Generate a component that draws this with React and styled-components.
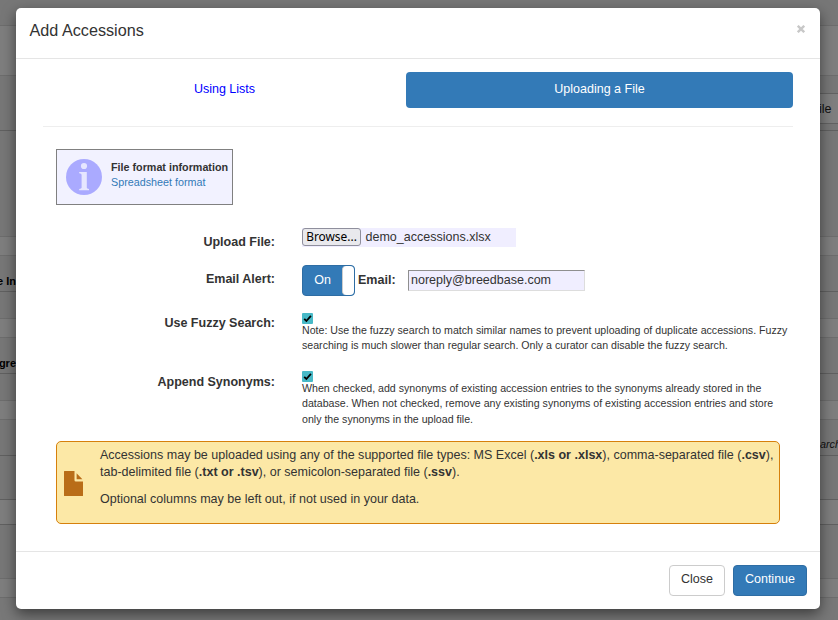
import React from "react";
import styled, { createGlobalStyle } from "styled-components";

const Global = createGlobalStyle`
  *, *::before, *::after { box-sizing: border-box; }
  body { margin: 0; font-family: "Liberation Sans", Arial, sans-serif; font-size: 12.52px; line-height: 17px; color: #333; }
  p { margin: 0; }
`;

const Screen = styled.div`
  position: relative;
  height: 620px;
  overflow: hidden;
  background: #787878;
`;

const PageBand = styled.div`
  display: flex;
  justify-content: space-between;
  height: ${(p) => p.$h}px;
  background: ${(p) => (p.$light ? "#7e7e7e" : "#777")};
  border-bottom: 1px solid ${(p) => (p.$dark ? "#606060" : "#6d6d6d")};
  color: #111;
  overflow: hidden;
`;

const PageLabel = styled.span`
  flex: none;
  width: 16px;
  display: flex;
  justify-content: flex-end;
  align-self: flex-end;
  padding-bottom: 1px;
  font-size: 11px;
  font-weight: bold;
  white-space: nowrap;
  color: #000;
`;

const PageNote = styled.span`
  width: 18px;
  margin-left: auto;
  padding-top: 16px;
  font-size: 10.8px;
  font-style: italic;
  white-space: nowrap;
`;

const PageButton = styled.span`
  width: 19px;
  height: 31px;
  margin: 17px 0 0 auto;
  padding: 7px 0 0 0;
  border: solid #626262;
  border-width: 1px 0;
  background: #7f7f7f;
  white-space: nowrap;
`;

const Modal = styled.section`
  position: absolute;
  top: 8px;
  left: 16px;
  width: 804px;
  height: 601px;
  display: flex;
  flex-direction: column;
  background: #fff;
  background-clip: padding-box;
  border-radius: 5px;
  box-shadow: 0 5px 14px rgba(0, 0, 0, 0.5);
`;

const Header = styled.header`
  display: flex;
  justify-content: space-between;
  height: 51px;
  padding: 12px 15px 0 13.5px;
  border-bottom: 1px solid #e5e5e5;
`;

const Title = styled.h4`
  margin: 0;
  font-size: 16.2px;
  line-height: 20px;
  font-weight: normal;
`;

const CloseIcon = styled.svg`
  margin-top: 5px;
`;

const Body = styled.div`
  flex: 1;
  padding: 13px 27px 0;
`;

const Tabs = styled.nav`
  display: grid;
  grid-template-columns: 363px 387px;
  height: 55px;
  border-bottom: 1px solid #eee;
`;

const Tab = styled.a`
  height: 36px;
  border-radius: 4px;
  line-height: 34px;
  text-align: center;
  color: ${(p) => (p.$active ? "#fff" : "#00f")};
  background: ${(p) => (p.$active ? "#337ab7" : "none")};
`;

const Content = styled.div`
  padding: 22px 13px 0;
`;

const InfoBox = styled.div`
  display: flex;
  width: 177px;
  height: 56px;
  padding: 9px 0 0 9px;
  gap: 9px;
  border: 1px solid #808080;
  background: #f2f2ff;
  font-size: 10.76px;
  line-height: 15px;
  white-space: nowrap;
`;

const InfoText = styled.div`
  padding-top: 1px;
`;

const InfoLink = styled.div`
  color: #337ab7;
`;

const Form = styled.div`
  padding-top: 23px;
`;

const Row = styled.div`
  display: grid;
  grid-template-columns: 219px 500px;
  column-gap: 27px;
  height: ${(p) => p.$h}px;
`;

const Label = styled.label`
  text-align: right;
  font-weight: bold;
  padding-top: ${(p) => p.$top}px;
`;

const FileInput = styled.div`
  display: flex;
  width: 214px;
  height: 19px;
  gap: 4.5px;
  line-height: 18px;
  background: #f0eeff;
`;

const BrowseButton = styled.span`
  width: 59px;
  height: 18px;
  border: 1px solid #8f8f9d;
  border-radius: 3px;
  background: #e9e9ed;
  color: #000;
  font-family: "Noto Sans", sans-serif;
  font-size: 11.9px;
  line-height: 15px;
  text-align: center;
`;

const EmailLine = styled.div`
  display: flex;
  align-items: flex-start;
`;

const Toggle = styled.div`
  display: flex;
  width: 53px;
  height: 31px;
  border: 1px solid #2e6da4;
  border-radius: 4px;
  background: #337ab7;
  color: #fff;
  line-height: 29px;
`;

const ToggleText = styled.span`
  flex: 1;
  text-align: center;
`;

const ToggleHandle = styled.span`
  width: 12px;
  border: 1px solid #ccc;
  border-width: 0 0 0 1px;
  border-radius: 4px;
  background: #fff;
`;

const EmailLabel = styled.b`
  width: 50px;
  margin: 7px 0 0 3px;
`;

const EmailInput = styled.div`
  width: 177px;
  height: 21px;
  margin-top: 5px;
  padding-left: 2px;
  border: 1px solid #ddd;
  border-top-color: #8f8f8f;
  border-left-color: #8f8f8f;
  background: #f0eeff;
  line-height: 18px;
`;

const Help = styled.div`
  font-size: 10.61px;
  line-height: 15.5px;
  white-space: nowrap;
`;

const CheckSlot = styled.div`
  height: 9.8px;
  svg { display: block; }
`;

const Notice = styled.div`
  display: flex;
  width: 724px;
  height: 83px;
  padding: 5px 0 0 7px;
  border: 1px solid #d6800c;
  border-radius: 5px;
  background: #fce8a6;
  white-space: nowrap;
  svg { flex: none; margin: 24px 17px 0 0; }
`;

const NoticeText = styled.div`
  p + p { margin-top: 10px; }
`;

const Footer = styled.footer`
  display: flex;
  justify-content: flex-end;
  gap: 8px;
  height: 58px;
  padding: 13px 13px 0;
  border-top: 1px solid #e5e5e5;
`;

const Button = styled.button`
  width: ${(p) => (p.$primary ? 74 : 56)}px;
  height: 31px;
  padding: 0 0 2px;
  font: inherit;
  border: 1px solid ${(p) => (p.$primary ? "#2e6da4" : "#ccc")};
  border-radius: 4px;
  color: ${(p) => (p.$primary ? "#fff" : "#333")};
  background: ${(p) => (p.$primary ? "#337ab7" : "#fff")};
`;

const InfoIcon = () => (
  <svg width="36" height="36" viewBox="0 0 36 36">
    <circle cx="18" cy="18" r="18" fill="#aaaaff" />
    <circle cx="18" cy="7" r="3.1" fill="#e6e6ff" />
    <path d="M13.2 13H20.8V28.7Q20.8 29.8 23 30V31.2H13.2V30Q15.6 29.8 15.6 28.7V15.8Q15.6 14.4 13.2 14.2Z" fill="#e6e6ff" />
  </svg>
);

const CheckBox = () => (
  <CheckSlot>
    <svg width="11" height="11" viewBox="0 0 11 11">
      <rect width="11" height="11" rx="1" fill="#48b9c7" />
      <path d="M2.2 5.8 4.4 8 8.9 2.8" fill="none" stroke="#000" strokeWidth="1.8" />
    </svg>
  </CheckSlot>
);

const FileIcon = () => (
  <svg width="19" height="25" viewBox="0 0 19 25">
    <path d="M0 .5Q0 0 .5 0H10.5V9.2Q10.5 10.5 11.8 10.5H19V24.5Q19 25 18.5 25H.5Q0 25 0 24.5Z" fill="#b96d18" />
    <path d="M12.6 2.2 18.4 8.2H12.6Z" fill="#b96d18" />
  </svg>
);

const bands = [
  { h: 26 },
  { h: 50, light: true },
  { h: 55, dark: true, button: "ile" },
  { h: 106 },
  { h: 19, light: true },
  { h: 36, dark: true, label: "e In" },
  { h: 27 },
  { h: 19, light: true },
  { h: 36, dark: true, label: "gre" },
  { h: 27 },
  { h: 19, light: true },
  { h: 36, dark: true, note: "arch" },
  { h: 44, dark: true },
  { h: 25, light: true, dark: true },
  { h: 54 },
  { h: 19, light: true },
];

export default function App() {
  return (
    <>
      <Global />
      <Screen>
        {bands.map((b, i) => (
          <PageBand key={i} $h={b.h} $light={b.light} $dark={b.dark}>
            {b.label && <PageLabel>{b.label}</PageLabel>}
            {b.note && <PageNote>{b.note}</PageNote>}
            {b.button && <PageButton>{b.button}</PageButton>}
          </PageBand>
        ))}
        <Modal>
          <Header>
            <Title>Add Accessions</Title>
            <CloseIcon width="8" height="8" viewBox="0 0 8 8" role="img" aria-label="Close">
              <path d="M.8 .8 7.2 7.2M7.2 .8 .8 7.2" stroke="#c8c8c8" strokeWidth="2.4" />
            </CloseIcon>
          </Header>
          <Body>
            <Tabs>
              <Tab>Using Lists</Tab>
              <Tab $active>Uploading a File</Tab>
            </Tabs>
            <Content>
              <InfoBox>
                <InfoIcon />
                <InfoText>
                  <b>File format information</b>
                  <InfoLink>Spreadsheet format</InfoLink>
                </InfoText>
              </InfoBox>
              <Form>
                <Row $h={37}>
                  <Label $top={6}>Upload File:</Label>
                  <FileInput>
                    <BrowseButton>Browse...</BrowseButton>
                    demo_accessions.xlsx
                  </FileInput>
                </Row>
                <Row $h={48}>
                  <Label $top={6}>Email Alert:</Label>
                  <EmailLine>
                    <Toggle>
                      <ToggleText>On</ToggleText>
                      <ToggleHandle />
                    </Toggle>
                    <EmailLabel>Email:</EmailLabel>
                    <EmailInput>noreply@breedbase.com</EmailInput>
                  </EmailLine>
                </Row>
                <Row $h={58}>
                  <Label $top={2}>Use Fuzzy Search:</Label>
                  <div>
                    <CheckBox />
                    <Help>
                      Note: Use the fuzzy search to match similar names to prevent uploading of duplicate accessions. Fuzzy
                      <br />
                      searching is much slower than regular search. Only a curator can disable the fuzzy search.
                    </Help>
                  </div>
                </Row>
                <Row $h={70}>
                  <Label $top={3}>Append Synonyms:</Label>
                  <div>
                    <CheckBox />
                    <Help>
                      When checked, add synonyms of existing accession entries to the synonyms already stored in the
                      <br />
                      database. When not checked, remove any existing synonyms of existing accession entries and store
                      <br />
                      only the synonyms in the upload file.
                    </Help>
                  </div>
                </Row>
              </Form>
              <Notice>
                <FileIcon />
                <NoticeText>
                  <p>
                    Accessions may be uploaded using any of the supported file types: MS Excel (<b>.xls or .xlsx</b>),
                    comma-separated file (<b>.csv</b>),
                    <br />
                    tab-delimited file (<b>.txt or .tsv</b>), or semicolon-separated file (<b>.ssv</b>).
                  </p>
                  <p>Optional columns may be left out, if not used in your data.</p>
                </NoticeText>
              </Notice>
            </Content>
          </Body>
          <Footer>
            <Button>Close</Button>
            <Button $primary>Continue</Button>
          </Footer>
        </Modal>
      </Screen>
    </>
  );
}
